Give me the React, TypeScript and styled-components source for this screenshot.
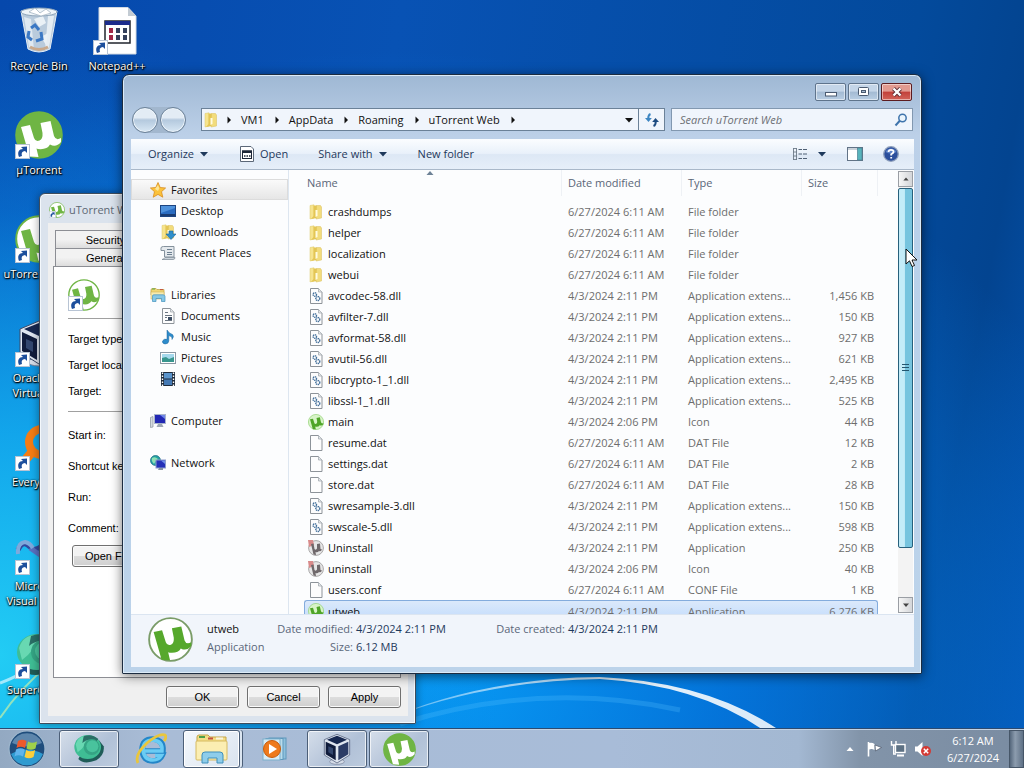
import React from 'react'
import styled, { createGlobalStyle, css } from 'styled-components'

const uiFont = "'Open Sans', 'Noto Sans', sans-serif"
const dialogFont = "'Liberation Sans', Arial, sans-serif"

const GlobalStyle = createGlobalStyle`
  * {
    box-sizing: border-box;
  }
  body {
    margin: 0;
    overflow: hidden;
    font-family: ${uiFont};
    font-size: 11px;
  }
  button, input, select {
    font: inherit;
    color: inherit;
    margin: 0;
    padding: 0;
  }
  a {
    color: inherit;
    text-decoration: none;
  }
  svg {
    display: block;
    flex: none;
  }
`

/* ---------- icons ---------- */

interface MuLogoProps {
  size: number
  disc?: string
  mark?: string
  ring?: string
}

const MuLogo: React.FC<MuLogoProps> = ({ size, disc = '#6fb544', mark = '#fff', ring = '#6fb544' }) => (
  <svg width={size} height={size} viewBox="0 0 48 48">
    <circle cx="24" cy="24" r="22.8" fill={disc} stroke={ring} strokeWidth="2" />
    <path
      d="M6 16 L15 14 L19 27 Q20.500 31 24.500 29.500 Q28 28 27.500 22 L25.500 12 L35.500 10 L39 25 Q41 30 46 27 L46 31 Q41 37 35 33.500 Q32 39 23 38 L21.500 37.500 L23.500 46 L14.500 45.500 Z"
      fill={mark}
    />
  </svg>
)

const ShortcutArrow = () => (
  <svg width="15" height="15" viewBox="0 0 15 15">
    <rect x="0.500" y="0.500" width="14" height="14" fill="#fff" stroke="#b8c4d4" />
    <path d="M4 13 C2 8 4 5 8 5 L6 3 L12 2.500 L12 9 L10 7 C7 7.500 6 9 7 12 Z" fill="#1d4f9c" />
  </svg>
)

const RecycleBinIcon = () => (
  <svg width="48" height="48" viewBox="0 0 48 48">
    <path d="M6 4 L42 4 L35 42 Q24 48 13 42 Z" fill="#b9cbdc" stroke="#e6eef5" />
    <path d="M9 10 L14 40 L19 43 L16 12 Z" fill="#dfe9f1" />
    <path d="M33 9 L30 43 L34 41 L39 9 Z" fill="#e5edf3" />
    <path d="M19 12 L28 9 L31 16 L24 20 Z M26 30 L33 26 L31 38 Z" fill="#eaf1f6" />
    <ellipse cx="24" cy="5" rx="18" ry="4" fill="#eef4f8" stroke="#8fa5ba" />
    <path d="M14 5 L20 1 L25 6 L31 2 L36 6 L26 9 Z" fill="#fff" stroke="#9badbd" strokeWidth="0.700" />
    <path d="M16 21 l4 -3 l4 5 M26 25 l1 7 l-6 2 M17 33 l-4 -3 l1 -6" fill="none" stroke="#3b78c4" strokeWidth="3" />
    <path d="M15 40 Q24 45 33 40" fill="none" stroke="#c9a98c" strokeWidth="3" />
  </svg>
)

const NotepadIcon = () => (
  <svg width="48" height="48" viewBox="0 0 48 48">
    <path d="M6 0.500 H35 L43 9 V47 H6 Z" fill="#fff" stroke="#d3dae2" />
    <path d="M35 0.500 V9 H43 Z" fill="#c3cbd3" />
    <rect x="12" y="14" width="25" height="22" fill="#fff" stroke="#20242c" strokeWidth="1.500" />
    <rect x="12" y="14" width="25" height="4" fill="#1c2c8c" />
    {[22, 29].map((y) =>
      [16, 23, 30].map((x) => (
        <rect key={`${x}-${y}`} x={x} y={y - 1} width="4" height="5" fill={x === 16 ? '#a02848' : '#33405c'} />
      )),
    )}
  </svg>
)

const CubeIcon: React.FC<{ size: number }> = ({ size }) => (
  <svg width={size} height={size} viewBox="0 0 48 48">
    <ellipse cx="24" cy="43" rx="11" ry="4" fill="#d5dce8" stroke="#77829a" />
    <path d="M24 2 L43 10 V33 L24 45 L5 33 V10 Z" fill="#dfe6f0" stroke="#3c4a68" />
    <path d="M24 4 L39 10 L24 17 L9 10 Z" fill="#172850" />
    <path d="M7 13 L22 20 V41 L7 32 Z" fill="#101c3c" />
    <path d="M41 13 L26 20 V41 L41 32 Z" fill="#2b3c66" />
    <path d="M11 20 L18 23 V33 L11 29 Z" fill="#33476f" />
  </svg>
)

const EverythingIcon = () => (
  <svg width="48" height="48" viewBox="0 0 48 48">
    <circle cx="27" cy="19" r="13" fill="none" stroke="#f47c14" strokeWidth="8" />
    <path d="M18 28 L6 42" stroke="#f47c14" strokeWidth="9" />
  </svg>
)

const VisualIcon = () => (
  <svg width="48" height="48" viewBox="0 0 48 48">
    <path d="M3 23 Q8 12 15 20 Q20 26 30 16 L44 10" fill="none" stroke="#34489c" strokeWidth="5" />
    <path d="M15 21 L34 34" stroke="#5a70c0" strokeWidth="5" />
    <path d="M3 27 Q2 16 10 15 Q15 16 18 21" fill="none" stroke="#7fa9dc" strokeWidth="4" />
  </svg>
)

const BubbleIcon: React.FC<{ size: number }> = ({ size }) => (
  <svg width={size} height={size} viewBox="0 0 48 48">
    <path d="M8 39 Q16 48 35 41 Q48 32 46 20 L39 11 L15 26 Z" fill="#1f5c58" />
    <ellipse cx="22" cy="21" rx="20" ry="18" fill="#3fbd94" />
    <path d="M4 17 Q8 3 24 4 Q35 5 38 13 Q24 9 18 18 Q13 25 7 29 Z" fill="#68d8b2" />
    <path d="M16 5 Q28 0 38 9 L34 15 Q24 6 14 15 Z" fill="#2a6e66" />
    <circle cx="28" cy="21" r="12" fill="#35a484" />
    <circle cx="29" cy="20" r="9" fill="#49c39d" />
  </svg>
)

const FolderIcon: React.FC<{ arrow?: boolean }> = ({ arrow }) => (
  <svg width="16" height="16" viewBox="0 0 16 16">
    <path d="M2 1.500 L6 0.800 V14 L2 15 Z" fill="#f6e48e" stroke="#dfc869" strokeWidth="0.500" />
    <path d="M5.500 1.500 H9 V14 L3 15 L5.500 12 Z" fill="#e4c654" />
    <path d="M8.500 1.500 H12.500 L13.500 3 V14 L8 15 Z" fill="#f2dc7c" stroke="#d9be5a" strokeWidth="0.500" />
    <path d="M7.500 6 L9.500 6 V12 L7.500 13 Z" fill="#fffbe0" />
    {arrow && <path d="M9 7 H13 V10 H16 L11 15.500 L6 10 H9 Z" fill="#2f8fcb" stroke="#17649c" strokeWidth="0.600" />}
  </svg>
)

const PageIcon: React.FC<{ kind?: 'dll' | 'text' }> = ({ kind }) => (
  <svg width="16" height="16" viewBox="0 0 16 16">
    <path d="M2.500 0.500 H10.500 L14 4 V15.500 H2.500 Z" fill="#fdfdfd" stroke="#8d9399" />
    <path d="M10.500 0.500 V4 H14" fill="#e4e7ea" stroke="#a5abb1" strokeWidth="0.800" />
    {kind === 'dll' && (
      <g fill="none" stroke="#45719c" strokeWidth="1.400">
        <circle cx="6.800" cy="6.500" r="1.700" strokeDasharray="1.200 0.600" />
        <circle cx="9.800" cy="10.500" r="2" strokeDasharray="1.200 0.500" />
      </g>
    )}
    {kind === 'text' && (
      <g>
        <path d="M5 4.500 H8 M5 7.500 H12 M5 12.500 H12" stroke="#6a7480" />
        <rect x="8" y="9" width="4" height="3" fill="#3b4c62" />
        <path d="M5 9.500 H7" stroke="#6a7480" />
      </g>
    )}
  </svg>
)

const StarIcon = () => (
  <svg width="16" height="16" viewBox="0 0 16 16">
    <path
      d="M8 0.500 L10.200 5.500 L15.600 6 L11.500 9.700 L12.800 15.200 L8 12.400 L3.200 15.200 L4.500 9.700 L0.400 6 L5.800 5.500 Z"
      fill="#fbc23a"
      stroke="#d98d20"
      strokeWidth="0.800"
    />
    <path d="M8 3 L9.300 6.500 L8 9 L5 7 Z" fill="#fde79a" />
  </svg>
)

const DesktopIcon = () => (
  <svg width="16" height="16" viewBox="0 0 16 16">
    <rect x="0.500" y="2.500" width="15" height="11" fill="#2b6cc0" stroke="#1d4480" />
    <path d="M1 3 H15 V5 L1 10 Z" fill="#4f92dc" />
    <rect x="1" y="11" width="14" height="2" fill="#1a3c72" />
  </svg>
)

const RecentIcon = () => (
  <svg width="16" height="16" viewBox="0 0 16 16">
    <path d="M3.500 1.500 H14 V12 H4.500 V5.500 H1 V3 Q1 1.500 3.500 1.500 Z" fill="#e4e9ed" stroke="#84919c" />
    <path d="M2 14.500 H13 Q15 14.500 15 12.500 H5 Q4.500 14 2 14.500 Z" fill="#ccd4db" stroke="#84919c" strokeWidth="0.800" />
    <path d="M7 4.500 H12 M7 7.500 H12 M7 9.500 H12" stroke="#6c7f90" />
  </svg>
)

const LibrariesIcon = () => (
  <svg width="16" height="16" viewBox="0 0 16 16">
    <path d="M1 3 Q1 1.500 2.500 1.500 H6 L7 2.500 H14 V8 H1 Z" fill="#f0d774" stroke="#b99c3e" strokeWidth="0.700" />
    <path d="M2 2 H5" stroke="#55a84c" />
    <path d="M10 2.600 H13" stroke="#c5503c" />
    <rect x="1" y="5" width="13" height="7" fill="#f8ebae" stroke="#cfb45c" strokeWidth="0.600" />
    <path d="M2.500 9 Q2.500 7.800 4 7.800 H13 Q15 7.800 15 9.500 V14.500 H11.500 V11.500 H6 V14.500 H2.500 Z" fill="#86c8e6" stroke="#4492bd" strokeWidth="0.700" />
  </svg>
)

const MusicIcon = () => (
  <svg width="16" height="16" viewBox="0 0 16 16">
    <path d="M7 1 Q9 4.500 12.500 5.500 Q14.500 7.500 12 10.500 Q13 7.500 8.800 6.500 V12 Q8.500 15 5 15 Q2 14.500 2.500 12 Q4 9.500 7 10.300 Z" fill="#2d8ccb" stroke="#1c669e" strokeWidth="0.500" />
  </svg>
)

const PicturesIcon = () => (
  <svg width="16" height="16" viewBox="0 0 16 16">
    <rect x="0.500" y="2.500" width="15" height="11" fill="#fff" stroke="#8b98a4" />
    <rect x="2" y="4" width="12" height="8" fill="#a5d8ec" />
    <path d="M2 8 L6 7 L9 9 L14 7 V12 H2 Z" fill="#38968e" />
  </svg>
)

const VideosIcon = () => (
  <svg width="16" height="16" viewBox="0 0 16 16">
    <rect x="1" y="1" width="14" height="14" fill="#1f2c3c" />
    <rect x="4" y="2" width="8" height="5.500" fill="#5a94cc" />
    <rect x="4" y="8.500" width="8" height="5.500" fill="#4479b4" />
    <path d="M2.500 1.500 V15 M13.500 1.500 V15" stroke="#fff" strokeWidth="1.400" strokeDasharray="1.500 1.500" />
  </svg>
)

const ComputerIcon = () => (
  <svg width="16" height="16" viewBox="0 0 16 16">
    <path d="M0.500 4.500 L3 3.500 V14 L0.500 14.500 Z" fill="#d5dbe0" stroke="#8b949c" strokeWidth="0.700" />
    <rect x="4.500" y="1.500" width="11" height="9" fill="#2228b4" stroke="#a9b4cc" />
    <path d="M10 2 H15 V6 Z" fill="#6f86e8" />
    <path d="M8 11 H12 L13.500 14 H6.500 Z" fill="#9da7b3" />
  </svg>
)

const NetworkIcon = () => (
  <svg width="16" height="16" viewBox="0 0 16 16">
    <circle cx="5.500" cy="5.500" r="5" fill="#24a2a4" stroke="#17647c" strokeWidth="0.700" />
    <path d="M2 3 Q5 1 8 4 Q5 6 4 9 Q1 6 2 3 Z" fill="#8fe0b4" />
    <rect x="6" y="5" width="9.500" height="8" fill="#2430b8" stroke="#8b9ccc" />
    <path d="M11 5.500 H15 V9 Z" fill="#6f8eea" />
    <path d="M9 13 H13 V15 H8 Z" fill="#8692a4" />
  </svg>
)

const AppWindowIcon = () => (
  <svg width="14" height="16" viewBox="0 0 14 16">
    <path d="M0.500 0.500 H11 L13.500 3 V15.500 H0.500 Z" fill="#fff" stroke="#5c6878" />
    <rect x="2.500" y="5" width="9" height="7.500" fill="#fff" stroke="#1c2636" />
    <rect x="2" y="4.500" width="10" height="2.500" fill="#1c2636" />
    <path d="M4 10 H5.500 M6.500 10 H8 M9 10 H10.500" stroke="#1c2636" strokeWidth="1.500" />
  </svg>
)

const RefreshIcon = () => (
  <svg width="14" height="14" viewBox="0 0 14 14">
    <path d="M5.500 1 Q3 2 3.300 6" fill="none" stroke="#3d86c2" strokeWidth="2" />
    <path d="M0 5 H6.800 L3.500 9 Z" fill="#3d86c2" />
    <path d="M8.500 13 Q11 12 10.700 8" fill="none" stroke="#1d4b80" strokeWidth="2" />
    <path d="M7.200 9 H14 L10.500 5 Z" fill="#1d4b80" />
  </svg>
)

const SearchIcon = () => (
  <svg width="14" height="14" viewBox="0 0 14 14">
    <circle cx="8.500" cy="5" r="3.700" fill="#eaf4fc" stroke="#3f74ac" strokeWidth="1.500" />
    <path d="M5.800 7.800 L1.500 12.500" stroke="#3f74ac" strokeWidth="2" />
  </svg>
)

const ViewIcon = () => (
  <svg width="16" height="14" viewBox="0 0 16 14">
    <path d="M1.500 1 V13 M4.500 1 V13 M1 1.500 H5 M1 5 H5 M1 9 H5 M1 12.500 H5" stroke="#6d7a88" strokeWidth="0.900" />
    <path d="M6.500 2.500 H10 M11 2.500 H15 M6.500 7 H10 M11 7 H15 M6.500 11.500 H10 M11 11.500 H15" stroke="#4f6074" />
  </svg>
)

const PaneIcon = () => (
  <svg width="16" height="14" viewBox="0 0 16 14">
    <rect x="0.500" y="0.500" width="15" height="13" fill="#fff" stroke="#627386" />
    <path d="M1 2 H15" stroke="#93a3b4" />
    <rect x="10.500" y="1" width="4.500" height="12" fill="#58b4bc" stroke="#4a7f92" strokeWidth="0.700" />
  </svg>
)

const HelpIcon = () => (
  <svg width="16" height="16" viewBox="0 0 16 16">
    <circle cx="8" cy="8" r="7.300" fill="#2c4f9c" stroke="#8fa0bc" strokeWidth="1.300" />
    <path d="M2.500 6 A6 6 0 0 1 13.500 6 Q8 9 2.500 6 Z" fill="#5e83c8" />
    <path d="M5.500 6 Q5.700 3.800 8 3.800 Q10.600 3.800 10.500 6 Q10.300 7.200 8.200 8.200 V9.600 M8.200 11 V12.600" fill="none" stroke="#fff" strokeWidth="1.800" />
  </svg>
)

const Triangle: React.FC<{ dir: 'right' | 'down' | 'up'; size?: number; color?: string }> = ({ dir, size = 8, color = '#111' }) => {
  const d = { right: 'M2.500 0.500 L6 4 L2.500 7.500 Z', down: 'M0 2 H8 L4 6.500 Z', up: 'M0.500 6 H7.500 L4 2 Z' }[dir]
  return (
    <svg width={size} height={size} viewBox="0 0 8 8">
      <path d={d} fill={color} />
    </svg>
  )
}

const StartOrb = () => (
  <svg width="38" height="38" viewBox="0 0 38 38">
    <circle cx="19" cy="19" r="18" fill="#1f4d7c" stroke="#9db6cc" strokeWidth="1.200" />
    <path d="M3 24 Q19 15 35 24 A17 17 0 0 1 3 24 Z" fill="#2f9bd0" />
    <path d="M4 13 A16.500 16.500 0 0 1 34 13 Q19 20 4 13 Z" fill="#5d86ac" />
    <path d="M10 11 Q14 8.500 18.500 11 L17 18 Q12.500 15.500 8.500 18 Z" fill="#ee5a2c" />
    <path d="M20 11.500 Q24 14 29 11.500 L27.500 18.500 Q23 21 18.500 18.500 Z" fill="#9fd04a" />
    <path d="M8 19.500 Q12.500 17 16.800 19.500 L15 26.500 Q10.500 24 6.500 26.500 Z" fill="#5fb4ec" />
    <path d="M18.200 20 Q22.500 22.500 27.200 20 L25.500 27 Q21 29.500 16.500 27 Z" fill="#fccf3c" />
  </svg>
)

const ExplorerEIcon = () => (
  <svg width="32" height="32" viewBox="0 0 32 32">
    <path d="M8 18 H28 Q29 7 18 6 Q7 6 7 17 Q8 28 18 28 Q25 28 27.500 22 H20.500" fill="none" stroke="#2386c8" strokeWidth="5.500" />
    <path d="M9 18 H27 Q28 8 18 7 Q8 7 8 17 Q9 27 18 27 Q24 27 26.500 22.500 H20" fill="none" stroke="#6accf4" strokeWidth="3.500" />
    <path d="M3 30 Q-1 22 12 10 Q24 0 30 2 Q32 4 29 8" fill="none" stroke="#e9c63c" strokeWidth="2.800" />
  </svg>
)

const PlayerIcon = () => (
  <svg width="26" height="26" viewBox="0 0 26 26">
    <rect x="7" y="2" width="17" height="21" fill="#8fc0dc" stroke="#5f98bc" />
    <rect x="4" y="2.500" width="17" height="21" fill="#b9dcec" stroke="#5f98bc" />
    <rect x="1" y="3" width="17" height="21" fill="#d6ecf6" stroke="#7db0cc" />
    <circle cx="10" cy="13" r="8.500" fill="#ee7a1c" stroke="#c85c0c" />
    <path d="M7 8 L15 13 L7 18 Z" fill="#fff" />
  </svg>
)

const ExplorerTaskIcon = () => (
  <svg width="36" height="32" viewBox="0 0 36 32">
    <path d="M3 4 Q3 2 5 2 H14 L16 4 H32 V26 H3 Z" fill="#f3dd86" stroke="#c4a548" />
    <path d="M5 4 H11" stroke="#4da04a" strokeWidth="2" />
    <path d="M14 5.500 H19" stroke="#c4523e" strokeWidth="2" />
    <path d="M22 5.500 H29" stroke="#f8f4e0" strokeWidth="2" />
    <rect x="2" y="8" width="31" height="19" rx="1" fill="#fbeeb2" stroke="#d6ba60" />
    <path d="M8 22 Q8 19 11 19 H26 Q29 19 29 22 V30 H23 V25 H14 V30 H8 Z" fill="#8ecdea" stroke="#3f8fbc" />
  </svg>
)

const FlagIcon = () => (
  <svg width="16" height="16" viewBox="0 0 16 16">
    <path d="M2.500 1 V15.500" stroke="#fff" strokeWidth="1.600" />
    <path d="M3 2 Q6 1 8.500 3 V9 Q6 7.500 3 8.500 Z" fill="#fff" />
    <path d="M9 4 L15.500 6.500 L9.500 10 Z" fill="#fff" stroke="#4c5868" strokeWidth="0.700" />
  </svg>
)

const TrayNetworkIcon = () => (
  <svg width="16" height="16" viewBox="0 0 16 16">
    <path d="M1.500 0 V4 H6 V0 M3.700 4 V13 H6" fill="none" stroke="#fff" strokeWidth="1.400" />
    <rect x="5.500" y="3.500" width="9.500" height="8" fill="#5d7184" stroke="#fff" strokeWidth="1.400" />
    <path d="M7 14.500 H14" stroke="#fff" strokeWidth="2" />
  </svg>
)

const SpeakerIcon = () => (
  <svg width="18" height="16" viewBox="0 0 18 16">
    <path d="M1 5.500 H3.500 L8.500 1 V15 L3.500 10.500 H1 Z" fill="#fff" />
    <circle cx="12" cy="10" r="5" fill="#d43a34" />
    <path d="M9.800 7.800 L14.200 12.200 M14.200 7.800 L9.800 12.200" stroke="#fff" strokeWidth="1.500" />
  </svg>
)

/* ---------- desktop ---------- */

const Screen = styled.div`
  display: flex;
  flex-direction: column;
  height: 100vh;
  overflow: hidden;
  position: relative;
`

const Desktop = styled.main`
  flex: 1;
  min-height: 0;
  position: relative;
  background:
    radial-gradient(ellipse 500px 640px at 0% 90%, #22ccf4, rgba(20, 176, 240, 0.85) 35%, rgba(10, 130, 220, 0.45) 70%, transparent 100%),
    radial-gradient(ellipse 760px 620px at 38% 92%, #08a0f8, rgba(4, 128, 236, 0.75) 45%, transparent 100%),
    linear-gradient(100deg, #0648ac 0%, #0852b4 35%, #034a9c 80%, #034490 90%, #0455b2 100%);
`

const Streaks = styled.svg`
  position: absolute;
  left: 0;
  bottom: 0;
  width: 100%;
  height: 100%;
`

const IconGrid = styled.div`
  display: grid;
  grid-auto-columns: 78px;
  grid-auto-flow: column;
  grid-template-rows: repeat(7, 104px);
  height: 100%;
  position: relative;
  width: max-content;
`

const DesktopLink = styled.a`
  align-items: center;
  color: #fff;
  display: flex;
  flex-direction: column;
  gap: 3px;
  line-height: 15px;
  padding-top: 7px;
  text-align: center;
  text-shadow: 1px 1px 1px #000, 0 1px 2px #000, 0 0 2px #000;
  white-space: pre-line;
`

const IconFrame = styled.span`
  display: block;
  position: relative;
`

const Badge = styled.span<{ $size?: number }>`
  bottom: 0;
  left: 0;
  position: absolute;
  svg {
    height: ${(props) => props.$size || 15}px;
    width: ${(props) => props.$size || 15}px;
  }
`

const desktopItems = [
  { label: 'Recycle Bin', icon: <RecycleBinIcon />, shortcut: false },
  { label: 'µTorrent', icon: <MuLogo size={48} />, shortcut: true },
  { label: 'uTorrent Web', icon: <MuLogo size={48} disc="#fff" mark="#6fb544" />, shortcut: true },
  { label: 'Oracle VM\nVirtualBox', icon: <CubeIcon size={48} />, shortcut: true },
  { label: 'Everything', icon: <EverythingIcon />, shortcut: true },
  { label: 'Microsoft\nVisual Stud...', icon: <VisualIcon />, shortcut: true },
  { label: 'SuperCopier', icon: <BubbleIcon size={48} />, shortcut: true },
  { label: 'Notepad++', icon: <NotepadIcon />, shortcut: true },
]

/* ---------- shortcut properties dialog ---------- */

const Dialog = styled.section`
  background: #dbe3ed;
  border: 1px solid #3e4c5c;
  border-radius: 6px 6px 1px 1px;
  box-shadow: inset 0 0 0 1px #f4f8fc, 0 0 8px rgba(0, 0, 0, 0.4);
  display: flex;
  flex-direction: column;
  font-family: ${dialogFont};
  height: 531px;
  left: 39px;
  padding: 0 7px 7px 8px;
  position: absolute;
  top: 193px;
  width: 377px;
`

const DialogTitle = styled.h2`
  align-items: center;
  color: #5e6874;
  display: flex;
  font-family: ${uiFont};
  font-size: 11px;
  font-weight: 400;
  gap: 4px;
  height: 29px;
  margin: 0;
  padding: 2px 1px 0;
`

const DialogBody = styled.div`
  background: #f0f0f0;
  display: flex;
  flex: 1;
  flex-direction: column;
  padding: 7px 7px 8px 5px;
`

const TabRow = styled.div`
  display: grid;
  grid-template-columns: 101px 1fr 1fr;
  padding: 0 2px;
`

const Tab = styled.button<{ $active?: boolean }>`
  background: ${(props) => (props.$active ? '#fff' : 'linear-gradient(#f2f2f2 50%, #dddddd)')};
  border: 1px solid #8c8e94;
  border-bottom: 0;
  height: 18px;
`

const TabPage = styled.div`
  background: #fff;
  border: 1px solid #8c8e94;
  display: flex;
  flex: 1;
  flex-direction: column;
  padding: 12px 14px;
`

const Divider = styled.hr`
  border: 0;
  border-top: 1px solid #a0a0a0;
  margin: 7px 0;
  width: 100%;
`

const Field = styled.div<{ $tall?: boolean }>`
  align-items: center;
  display: grid;
  grid-template-columns: 92px 1fr;
  height: ${(props) => (props.$tall ? 31 : 26)}px;
  input,
  select {
    border: 1px solid #abadb3;
    height: 20px;
  }
`

const dialogButton = css`
  background: linear-gradient(#f3f3f3 50%, #dddddd 50%, #cfcfcf);
  border: 1px solid #707070;
  border-radius: 3px;
  box-shadow: inset 0 0 0 1px #fbfbfb;
  height: 22px;
`

const OpenLocation = styled.button`
  ${dialogButton}
  margin: 2px 0 0 4px;
  padding-left: 12px;
  text-align: left;
  width: 120px;
`

const DialogActions = styled.div`
  display: flex;
  gap: 8px;
  justify-content: flex-end;
  padding-top: 8px;
`

const DialogButton = styled.button`
  ${dialogButton}
  width: 73px;
`

/* ---------- explorer window ---------- */

const Explorer = styled.section`
  background: linear-gradient(#9fb8d4, #bcd0e8 60px, #b9d1ea 140px, #bcd3ea);
  border: 1px solid #1c2c40;
  border-radius: 7px 7px 1px 1px;
  bottom: 55px;
  box-shadow: inset 0 0 0 1px #dcebf8, 0 2px 12px rgba(0, 0, 0, 0.55);
  display: flex;
  flex-direction: column;
  left: 122px;
  padding: 0 7px 6px 8px;
  position: absolute;
  right: 102px;
  top: 74px;
`

const TitleBar = styled.header`
  display: flex;
  gap: 2px;
  height: 31px;
  justify-content: flex-end;
  padding: 8px 2px 0;
`

const WindowButton = styled.button<{ $close?: boolean }>`
  align-items: center;
  background: ${(props) =>
    props.$close
      ? 'linear-gradient(#e29a90 45%, #c2403a 50%, #d2645a)'
      : 'linear-gradient(#c4d5e8 45%, #a3bad3 50%, #b9cee4)'};
  border: 1px solid ${(props) => (props.$close ? '#5c1c20' : '#5f748c')};
  border-radius: 2px;
  box-shadow: inset 0 0 0 1px rgba(255, 255, 255, 0.5);
  display: flex;
  height: 18px;
  justify-content: center;
  width: 31px;
`

const NavBar = styled.div`
  align-items: center;
  display: flex;
  height: 33px;
  padding: 0 1px 6px;
`

const NavButtons = styled.div`
  background: #a2b7ce;
  border-radius: 13px;
  display: flex;
  gap: 2px;
`

const RoundButton = styled.button`
  background: linear-gradient(#e3ecf5 40%, #b4c9de 50%, #d8e7f4);
  border: 1px solid #6c8299;
  border-radius: 50%;
  box-shadow: inset 0 0 0 1px #eef5fb;
  height: 26px;
  width: 26px;
`

const AddressBar = styled.div`
  align-items: center;
  background: #f0f5fc;
  border: 1px solid #6b8198;
  display: flex;
  flex: 1;
  height: 23px;
  margin: 0 6px 0 15px;
  padding-left: 1px;
`

const Crumb = styled.button<{ $root?: boolean }>`
  align-items: center;
  background: none;
  border: 0;
  color: #111;
  display: flex;
  gap: 9px;
  height: 21px;
  padding: 0 0 0 ${(props) => (props.$root ? 6 : 8)}px;
`

const AddressAction = styled.button<{ $divided?: boolean }>`
  align-items: center;
  background: none;
  border: 0;
  border-left: ${(props) => (props.$divided ? '1px solid #6b8198' : '0')};
  display: flex;
  height: 21px;
  justify-content: center;
  margin-left: ${(props) => (props.$divided ? '0' : 'auto')};
  width: ${(props) => (props.$divided ? 26 : 18)}px;
`

const SearchBox = styled.label`
  align-items: center;
  background: #f0f5fc;
  border: 1px solid #8298b0;
  display: flex;
  height: 23px;
  padding: 0 4px 0 8px;
  width: 242px;
  input {
    background: none;
    border: 0;
    flex: 1;
    min-width: 0;
    outline: none;
  }
  input::placeholder {
    color: #6c6f74;
    font-style: italic;
    opacity: 1;
  }
`

const Toolbar = styled.div`
  align-items: center;
  background: linear-gradient(#fbfdff, #e9f1fa 48%, #dde8f5 52%, #e6eff9);
  border-bottom: 1px solid #a9b8c9;
  color: #1e395b;
  display: flex;
  height: 31px;
  padding: 0 15px 1px 17px;
`

const ToolButton = styled.button<{ $gap?: number }>`
  align-items: center;
  background: none;
  border: 0;
  display: flex;
  gap: 6px;
  height: 24px;
  margin-right: ${(props) => props.$gap || 0}px;
  white-space: nowrap;
`

const ToolSpacer = styled.div`
  flex: 1;
`

const Content = styled.div`
  background: #fcfdfe;
  display: flex;
  flex: 1;
  min-height: 0;
`

const Sidebar = styled.nav`
  border-right: 1px solid #dde6f0;
  display: flex;
  flex: none;
  flex-direction: column;
  gap: 21px;
  padding-top: 9px;
  width: 158px;
`

const SideList = styled.ul`
  list-style: none;
  margin: 0;
  padding: 0;
`

const SideLink = styled.a<{ $level: number; $selected?: boolean }>`
  align-items: center;
  background: ${(props) => (props.$selected ? 'linear-gradient(#fafafa, #e6e6e6)' : 'none')};
  border: 1px solid ${(props) => (props.$selected ? '#dcdcdc' : 'transparent')};
  color: #111;
  display: flex;
  gap: 5px;
  height: 21px;
  padding-left: ${(props) => (props.$level === 0 ? 18 : 28)}px;
`

const FilePane = styled.div`
  flex: 1;
  min-width: 0;
  overflow: hidden;
  padding-left: 15px;
`

const FileTable = styled.table`
  border-collapse: separate;
  border-spacing: 0;
  color: #6d6d6d;
  table-layout: fixed;
  width: calc(100% - 20px);
  th {
    border-right: 1px solid #eef1f5;
    color: #5a6678;
    font-weight: 400;
    height: 26px;
    padding: 0 6px 2px;
    position: relative;
    text-align: left;
  }
  th:first-child {
    padding-left: 3px;
  }
`

const SortMark = styled.span`
  left: 122px;
  position: absolute;
  top: -1px;
`

const FileRow = styled.tr<{ $selected?: boolean }>`
  td {
    border: 0 solid #84acdd;
    height: 21px;
    overflow: hidden;
    padding: 0 4px 0 6px;
    white-space: nowrap;
  }
  td:last-child {
    text-align: right;
  }
  td:first-child {
    padding-left: 4px;
  }
  ${(props) =>
    props.$selected &&
    css`
      td {
        background: linear-gradient(#dbe9fb, #c1dbfc);
        border-top-width: 1px;
      }
      td:first-child {
        border-left-width: 1px;
        border-top-left-radius: 3px;
        padding-left: 3px;
      }
      td:last-child {
        border-right-width: 1px;
        border-top-right-radius: 3px;
        padding-right: 3px;
      }
    `}
`

const HeadGap = styled.tbody`
  td {
    height: 5px;
    padding: 0;
  }
`

const FileName = styled.span`
  align-items: center;
  color: #111;
  display: flex;
  gap: 4px;
`

const ScrollBar = styled.div`
  background: #f3f3f3;
  display: flex;
  flex: none;
  flex-direction: column;
  justify-content: space-between;
  margin: 1px 1px 1px 0;
  width: 15px;
`

const ScrollButton = styled.button`
  align-items: center;
  background: linear-gradient(90deg, #f6f6f6, #d4d6d9);
  border: 1px solid #9a9ea4;
  display: flex;
  flex: none;
  height: 16px;
  justify-content: center;
`

const ScrollTrack = styled.div`
  display: flex;
  flex: 1;
  flex-direction: column;
  padding-top: 1px;
`

const ScrollThumb = styled.div`
  align-items: center;
  background: linear-gradient(90deg, #c4ecf8 0 42%, #76c4de 46% 100%);
  border: 1px solid #27607c;
  border-radius: 2px;
  display: flex;
  flex-direction: column;
  gap: 2px;
  height: 88%;
  justify-content: center;
`

const Grip = styled.span`
  background: #23566f;
  height: 1px;
  width: 7px;
`

const DetailsPane = styled.footer`
  align-items: center;
  background: #f1f5fb;
  border-top: 1px solid #dbe5f1;
  color: #5a6779;
  display: flex;
  height: 53px;
  padding: 0 0 4px 17px;
`

const DetailsGrid = styled.dl`
  display: grid;
  grid-template-columns: 63px 80px 134px 72px auto;
  column-gap: 3px;
  line-height: 18px;
  margin: 0 0 2px 14px;
  white-space: nowrap;
  dt {
    text-align: right;
  }
  dd {
    color: #1e395b;
    margin: 0;
  }
`

const DetailsName = styled.dd`
  && {
    color: ${(props) => props.color};
  }
`

type IconKind = 'folder' | 'dll' | 'mu' | 'page' | 'gray'

interface FileEntry {
  name: string
  icon: IconKind
  date: string
  type: string
  size?: string
}

const april = '4/3/2024 2:11 PM'
const june = '6/27/2024 6:11 AM'

const folder = (name: string): FileEntry => ({ name, icon: 'folder', date: june, type: 'File folder' })
const dll = (name: string, size: string): FileEntry => ({ name, icon: 'dll', date: april, type: 'Application extens...', size })
const dat = (name: string, size: string): FileEntry => ({ name, icon: 'page', date: june, type: 'DAT File', size })

const files: FileEntry[] = [
  folder('crashdumps'),
  folder('helper'),
  folder('localization'),
  folder('webui'),
  dll('avcodec-58.dll', '1,456 KB'),
  dll('avfilter-7.dll', '150 KB'),
  dll('avformat-58.dll', '927 KB'),
  dll('avutil-56.dll', '621 KB'),
  dll('libcrypto-1_1.dll', '2,495 KB'),
  dll('libssl-1_1.dll', '525 KB'),
  { name: 'main', icon: 'mu', date: '4/3/2024 2:06 PM', type: 'Icon', size: '44 KB' },
  dat('resume.dat', '12 KB'),
  dat('settings.dat', '2 KB'),
  dat('store.dat', '28 KB'),
  dll('swresample-3.dll', '150 KB'),
  dll('swscale-5.dll', '598 KB'),
  { name: 'Uninstall', icon: 'gray', date: april, type: 'Application', size: '250 KB' },
  { name: 'uninstall', icon: 'gray', date: '4/3/2024 2:06 PM', type: 'Icon', size: '40 KB' },
  { name: 'users.conf', icon: 'page', date: june, type: 'CONF File', size: '1 KB' },
  { name: 'utweb', icon: 'mu', date: april, type: 'Application', size: '6,276 KB' },
]

const UninstallIcon = () => (
  <svg width="16" height="16" viewBox="0 0 16 16">
    <circle cx="8" cy="8" r="7.400" fill="#e6e6e6" stroke="#aaa8a9" />
    <path d="M0 0 H5 L6 5 L1 7 Z" fill="#d88a8a" />
    <path d="M3 4 L5.500 3.500 L6.500 9 Q8 10.500 9 8.500 L9 4 L12 3.500 L12.500 9 L14 9.500 Q13 12 11 11 Q9.500 13 7.500 12 L8 15 L5.500 14.500 Z" fill="#6f686b" />
  </svg>
)

const fileIcons: Record<IconKind, React.ReactNode> = {
  folder: <FolderIcon />,
  dll: <PageIcon kind="dll" />,
  mu: <MuLogo size={16} disc="#d8f4c8" mark="#4fa528" ring="#8ed070" />,
  page: <PageIcon />,
  gray: <UninstallIcon />,
}

const sideGroups = [
  [
    { label: 'Favorites', icon: <StarIcon /> },
    { label: 'Desktop', icon: <DesktopIcon /> },
    { label: 'Downloads', icon: <FolderIcon arrow /> },
    { label: 'Recent Places', icon: <RecentIcon /> },
  ],
  [
    { label: 'Libraries', icon: <LibrariesIcon /> },
    { label: 'Documents', icon: <PageIcon kind="text" /> },
    { label: 'Music', icon: <MusicIcon /> },
    { label: 'Pictures', icon: <PicturesIcon /> },
    { label: 'Videos', icon: <VideosIcon /> },
  ],
  [{ label: 'Computer', icon: <ComputerIcon /> }],
  [{ label: 'Network', icon: <NetworkIcon /> }],
]

/* ---------- taskbar ---------- */

const Taskbar = styled.footer`
  align-items: center;
  background: linear-gradient(90deg, #93a9c2, #a9bcd6 15%, #a8bcd8 60%, #a3b8d2 78%, #8294a9 84%, #7a8ca2);
  border-top: 1px solid #c2d2e4;
  box-shadow: 0 -1px 0 #2c4a70;
  display: flex;
  flex: none;
  height: 39px;
  position: relative;
`

const StartButton = styled.button`
  background: none;
  border: 0;
  display: flex;
  justify-content: center;
  margin-right: 5px;
  width: 54px;
`

const taskShadows = {
  none: 'none',
  open: 'inset 0 0 0 1px rgba(255, 255, 255, 0.7)',
  active: 'inset 0 0 0 1px #fff, 2px 0 0 #dce6f1, 3px 0 0 #4c5f78',
}

const TaskButton = styled.button<{ $state?: 'open' | 'active' }>`
  align-items: center;
  background: ${(props) =>
    props.$state === 'active'
      ? 'linear-gradient(135deg, #f4f8fc, #d9e3ef)'
      : props.$state === 'open'
        ? 'linear-gradient(135deg, #d5deea, #b1c1d7 60%, #bccbde)'
        : 'none'};
  border: 1px solid ${(props) => (props.$state ? '#4c5f78' : 'transparent')};
  border-radius: 3px;
  box-shadow: ${(props) => taskShadows[props.$state || 'none']};
  display: flex;
  height: 38px;
  justify-content: center;
  margin-right: ${(props) => (props.$state === 'active' ? 5 : 2)}px;
  width: ${(props) => (props.$state === 'active' ? 57 : 60)}px;
`

const Tray = styled.div`
  align-items: center;
  display: flex;
  gap: 8px;
  margin-left: auto;
`

const TrayButton = styled.button`
  background: none;
  border: 0;
  &:first-child {
    margin-right: 4px;
  }
`

const Clock = styled.time`
  color: #fff;
  line-height: 17px;
  padding: 0 2px 0 7px;
  text-align: center;
`

const ShowDesktop = styled.button`
  background: linear-gradient(90deg, #55677c, #8c9cae 40%, #5f7186);
  border: 1px solid #465668;
  height: 38px;
  width: 15px;
`

const Cursor = styled.svg`
  left: 905px;
  position: absolute;
  top: 248px;
`

const PropertiesDialog = () => (
  <Dialog aria-label="uTorrent Web Properties">
    <DialogTitle>
      <IconFrame>
        <MuLogo size={16} disc="#fff" mark="#6fb544" />
        <Badge $size={7}>
          <ShortcutArrow />
        </Badge>
      </IconFrame>
      uTorrent Web
    </DialogTitle>
    <DialogBody>
      <TabRow>
        <Tab>Security</Tab>
        <Tab aria-label="Details" />
        <Tab aria-label="Previous Versions" />
      </TabRow>
      <TabRow>
        <Tab>General</Tab>
        <Tab $active aria-label="Shortcut" />
        <Tab aria-label="Compatibility" />
      </TabRow>
      <TabPage>
        <IconFrame>
          <MuLogo size={32} disc="#fff" mark="#6fb544" />
          <Badge>
            <ShortcutArrow />
          </Badge>
        </IconFrame>
        <Divider />
        <Field>Target type:</Field>
        <Field>Target location:</Field>
        <Field>
          <label htmlFor="target">Target:</label>
          <input id="target" />
        </Field>
        <Divider />
        <Field $tall>
          <label htmlFor="start">Start in:</label>
          <input id="start" />
        </Field>
        <Field $tall>
          <label htmlFor="key">Shortcut key:</label>
          <input id="key" />
        </Field>
        <Field $tall>
          <label htmlFor="run">Run:</label>
          <select id="run" />
        </Field>
        <Field $tall>
          <label htmlFor="comment">Comment:</label>
          <input id="comment" />
        </Field>
        <OpenLocation>Open File Location</OpenLocation>
      </TabPage>
      <DialogActions>
        <DialogButton>OK</DialogButton>
        <DialogButton>Cancel</DialogButton>
        <DialogButton>Apply</DialogButton>
      </DialogActions>
    </DialogBody>
  </Dialog>
)

const ExplorerWindow = () => (
  <Explorer aria-label="uTorrent Web">
    <TitleBar>
      <WindowButton aria-label="Minimize">
        <svg width="12" height="10" viewBox="0 0 12 10">
          <rect x="0.500" y="5.500" width="11" height="3.500" fill="#fff" stroke="#4a5a70" />
        </svg>
      </WindowButton>
      <WindowButton aria-label="Maximize">
        <svg width="12" height="10" viewBox="0 0 12 10">
          <rect x="0.500" y="0.500" width="10" height="8" rx="1" fill="#fff" stroke="#4a5a70" />
          <rect x="3.500" y="3.500" width="4" height="2" fill="#a8bcd2" stroke="#4a5a70" />
        </svg>
      </WindowButton>
      <WindowButton $close aria-label="Close">
        <svg width="12" height="10" viewBox="0 0 12 10">
          <path d="M2.500 1.500 L9.500 8.500 M9.500 1.500 L2.500 8.500" stroke="#5c2c34" strokeWidth="4" />
          <path d="M2.500 1.500 L9.500 8.500 M9.500 1.500 L2.500 8.500" stroke="#fff" strokeWidth="2.400" />
        </svg>
      </WindowButton>
    </TitleBar>
    <NavBar>
      <NavButtons>
        <RoundButton aria-label="Back" />
        <RoundButton aria-label="Forward" />
      </NavButtons>
      <AddressBar>
        <FolderIcon />
        <Crumb $root aria-label="Root">
          <Triangle dir="right" />
        </Crumb>
        {['VM1', 'AppData', 'Roaming', 'uTorrent Web'].map((name) => (
          <Crumb key={name}>
            {name}
            <Triangle dir="right" />
          </Crumb>
        ))}
        <AddressAction aria-label="Previous locations">
          <Triangle dir="down" />
        </AddressAction>
        <AddressAction $divided aria-label="Refresh">
          <RefreshIcon />
        </AddressAction>
      </AddressBar>
      <SearchBox>
        <input aria-label="Search" placeholder="Search uTorrent Web" />
        <SearchIcon />
      </SearchBox>
    </NavBar>
    <Toolbar>
      <ToolButton $gap={32}>
        Organize <Triangle dir="down" color="#1e395b" />
      </ToolButton>
      <ToolButton $gap={30}>
        <AppWindowIcon /> Open
      </ToolButton>
      <ToolButton $gap={31}>
        Share with <Triangle dir="down" color="#1e395b" />
      </ToolButton>
      <ToolButton>New folder</ToolButton>
      <ToolSpacer />
      <ToolButton $gap={10} aria-label="Change your view">
        <ViewIcon />
      </ToolButton>
      <ToolButton $gap={21} aria-label="More options">
        <Triangle dir="down" color="#1e395b" />
      </ToolButton>
      <ToolButton $gap={20} aria-label="Preview pane">
        <PaneIcon />
      </ToolButton>
      <ToolButton aria-label="Help">
        <HelpIcon />
      </ToolButton>
    </Toolbar>
    <Content>
      <Sidebar>
        {sideGroups.map((group) => (
          <SideList key={group[0].label}>
            {group.map((item, i) => (
              <li key={item.label}>
                <SideLink href="#" $level={i === 0 ? 0 : 1} $selected={item.label === 'Favorites'}>
                  {item.icon}
                  {item.label}
                </SideLink>
              </li>
            ))}
          </SideList>
        ))}
      </Sidebar>
      <FilePane>
        <FileTable>
          <colgroup>
            <col />
            <col width="120" />
            <col width="120" />
            <col width="76" />
          </colgroup>
          <thead>
            <tr>
              <th>
                Name
                <SortMark>
                  <Triangle dir="up" color="#6d8296" />
                </SortMark>
              </th>
              <th>Date modified</th>
              <th>Type</th>
              <th>Size</th>
            </tr>
          </thead>
          <HeadGap>
            <tr>
              <td colSpan={4} />
            </tr>
          </HeadGap>
          <tbody>
            {files.map((file) => (
              <FileRow key={file.name} $selected={file.name === 'utweb'}>
                <td>
                  <FileName>
                    {fileIcons[file.icon]}
                    {file.name}
                  </FileName>
                </td>
                <td>{file.date}</td>
                <td>{file.type}</td>
                <td>{file.size}</td>
              </FileRow>
            ))}
          </tbody>
        </FileTable>
      </FilePane>
      <ScrollBar>
        <ScrollButton aria-label="Scroll up">
          <Triangle dir="up" size={6} color="#444" />
        </ScrollButton>
        <ScrollTrack>
          <ScrollThumb>
            <Grip />
            <Grip />
            <Grip />
          </ScrollThumb>
        </ScrollTrack>
        <ScrollButton aria-label="Scroll down">
          <Triangle dir="down" size={6} color="#444" />
        </ScrollButton>
      </ScrollBar>
    </Content>
    <DetailsPane>
      <MuLogo size={45} disc="#fff" mark="#56a82c" ring="#7a9c68" />
      <DetailsGrid>
        <DetailsName color="#111">utweb</DetailsName>
        <dt>Date modified:</dt>
        <dd>4/3/2024 2:11 PM</dd>
        <dt>Date created:</dt>
        <dd>4/3/2024 2:11 PM</dd>
        <DetailsName color="#5a6779">Application</DetailsName>
        <dt>Size:</dt>
        <dd>6.12 MB</dd>
      </DetailsGrid>
    </DetailsPane>
  </Explorer>
)

const App: React.FC = () => (
  <Screen>
    <GlobalStyle />
    <Desktop>
      <Streaks viewBox="0 0 1024 729" preserveAspectRatio="none">
        <defs>
          <linearGradient id="beam" x1="0" x2="1">
            <stop offset="0" stopColor="#fff" stopOpacity="0.3" />
            <stop offset="0.600" stopColor="#fff" stopOpacity="0.900" />
            <stop offset="1" stopColor="#fff" stopOpacity="0.850" />
          </linearGradient>
        </defs>
        <path d="M380 722 Q480 678 600 677 Q710 682 782 732 L766 732 Q700 685 600 679 Q480 681 380 722 Z" fill="url(#beam)" />
        <path d="M400 724 Q540 680 680 710" fill="none" stroke="#5cc4ff" strokeOpacity="0.250" strokeWidth="5" />
        <path d="M0 683 Q20 676 50 656" fill="none" stroke="#d8f6ff" strokeOpacity="0.700" strokeWidth="3" />
        <path d="M0 718 Q20 688 50 664" fill="none" stroke="#c4f0a8" strokeOpacity="0.700" strokeWidth="2" />
      </Streaks>
      <IconGrid>
        {desktopItems.map((item) => (
          <DesktopLink key={item.label} href="#">
            <IconFrame>
              {item.icon}
              {item.shortcut && (
                <Badge>
                  <ShortcutArrow />
                </Badge>
              )}
            </IconFrame>
            {item.label}
          </DesktopLink>
        ))}
      </IconGrid>
      <PropertiesDialog />
      <ExplorerWindow />
    </Desktop>
    <Taskbar>
      <StartButton aria-label="Start">
        <StartOrb />
      </StartButton>
      <TaskButton $state="open" aria-label="Messenger">
        <BubbleIcon size={32} />
      </TaskButton>
      <TaskButton aria-label="Internet Explorer">
        <ExplorerEIcon />
      </TaskButton>
      <TaskButton $state="active" aria-label="Windows Explorer">
        <ExplorerTaskIcon />
      </TaskButton>
      <TaskButton aria-label="Media Player">
        <PlayerIcon />
      </TaskButton>
      <TaskButton $state="open" aria-label="VirtualBox">
        <CubeIcon size={32} />
      </TaskButton>
      <TaskButton $state="open" aria-label="µTorrent">
        <MuLogo size={33} />
      </TaskButton>
      <Tray>
        <TrayButton aria-label="Show hidden icons">
          <Triangle dir="up" color="#fff" />
        </TrayButton>
        <TrayButton aria-label="Action Center">
          <FlagIcon />
        </TrayButton>
        <TrayButton aria-label="Network">
          <TrayNetworkIcon />
        </TrayButton>
        <TrayButton aria-label="Volume">
          <SpeakerIcon />
        </TrayButton>
        <Clock>
          6:12 AM
          <br />
          6/27/2024
        </Clock>
        <ShowDesktop aria-label="Show desktop" />
      </Tray>
    </Taskbar>
    <Cursor width="13" height="20" viewBox="0 0 13 20">
      <path d="M1 1 V16 L4.500 12.800 L7 18.500 L9.500 17.500 L7 12 H12 Z" fill="#fff" stroke="#111" />
    </Cursor>
  </Screen>
)

export default App
